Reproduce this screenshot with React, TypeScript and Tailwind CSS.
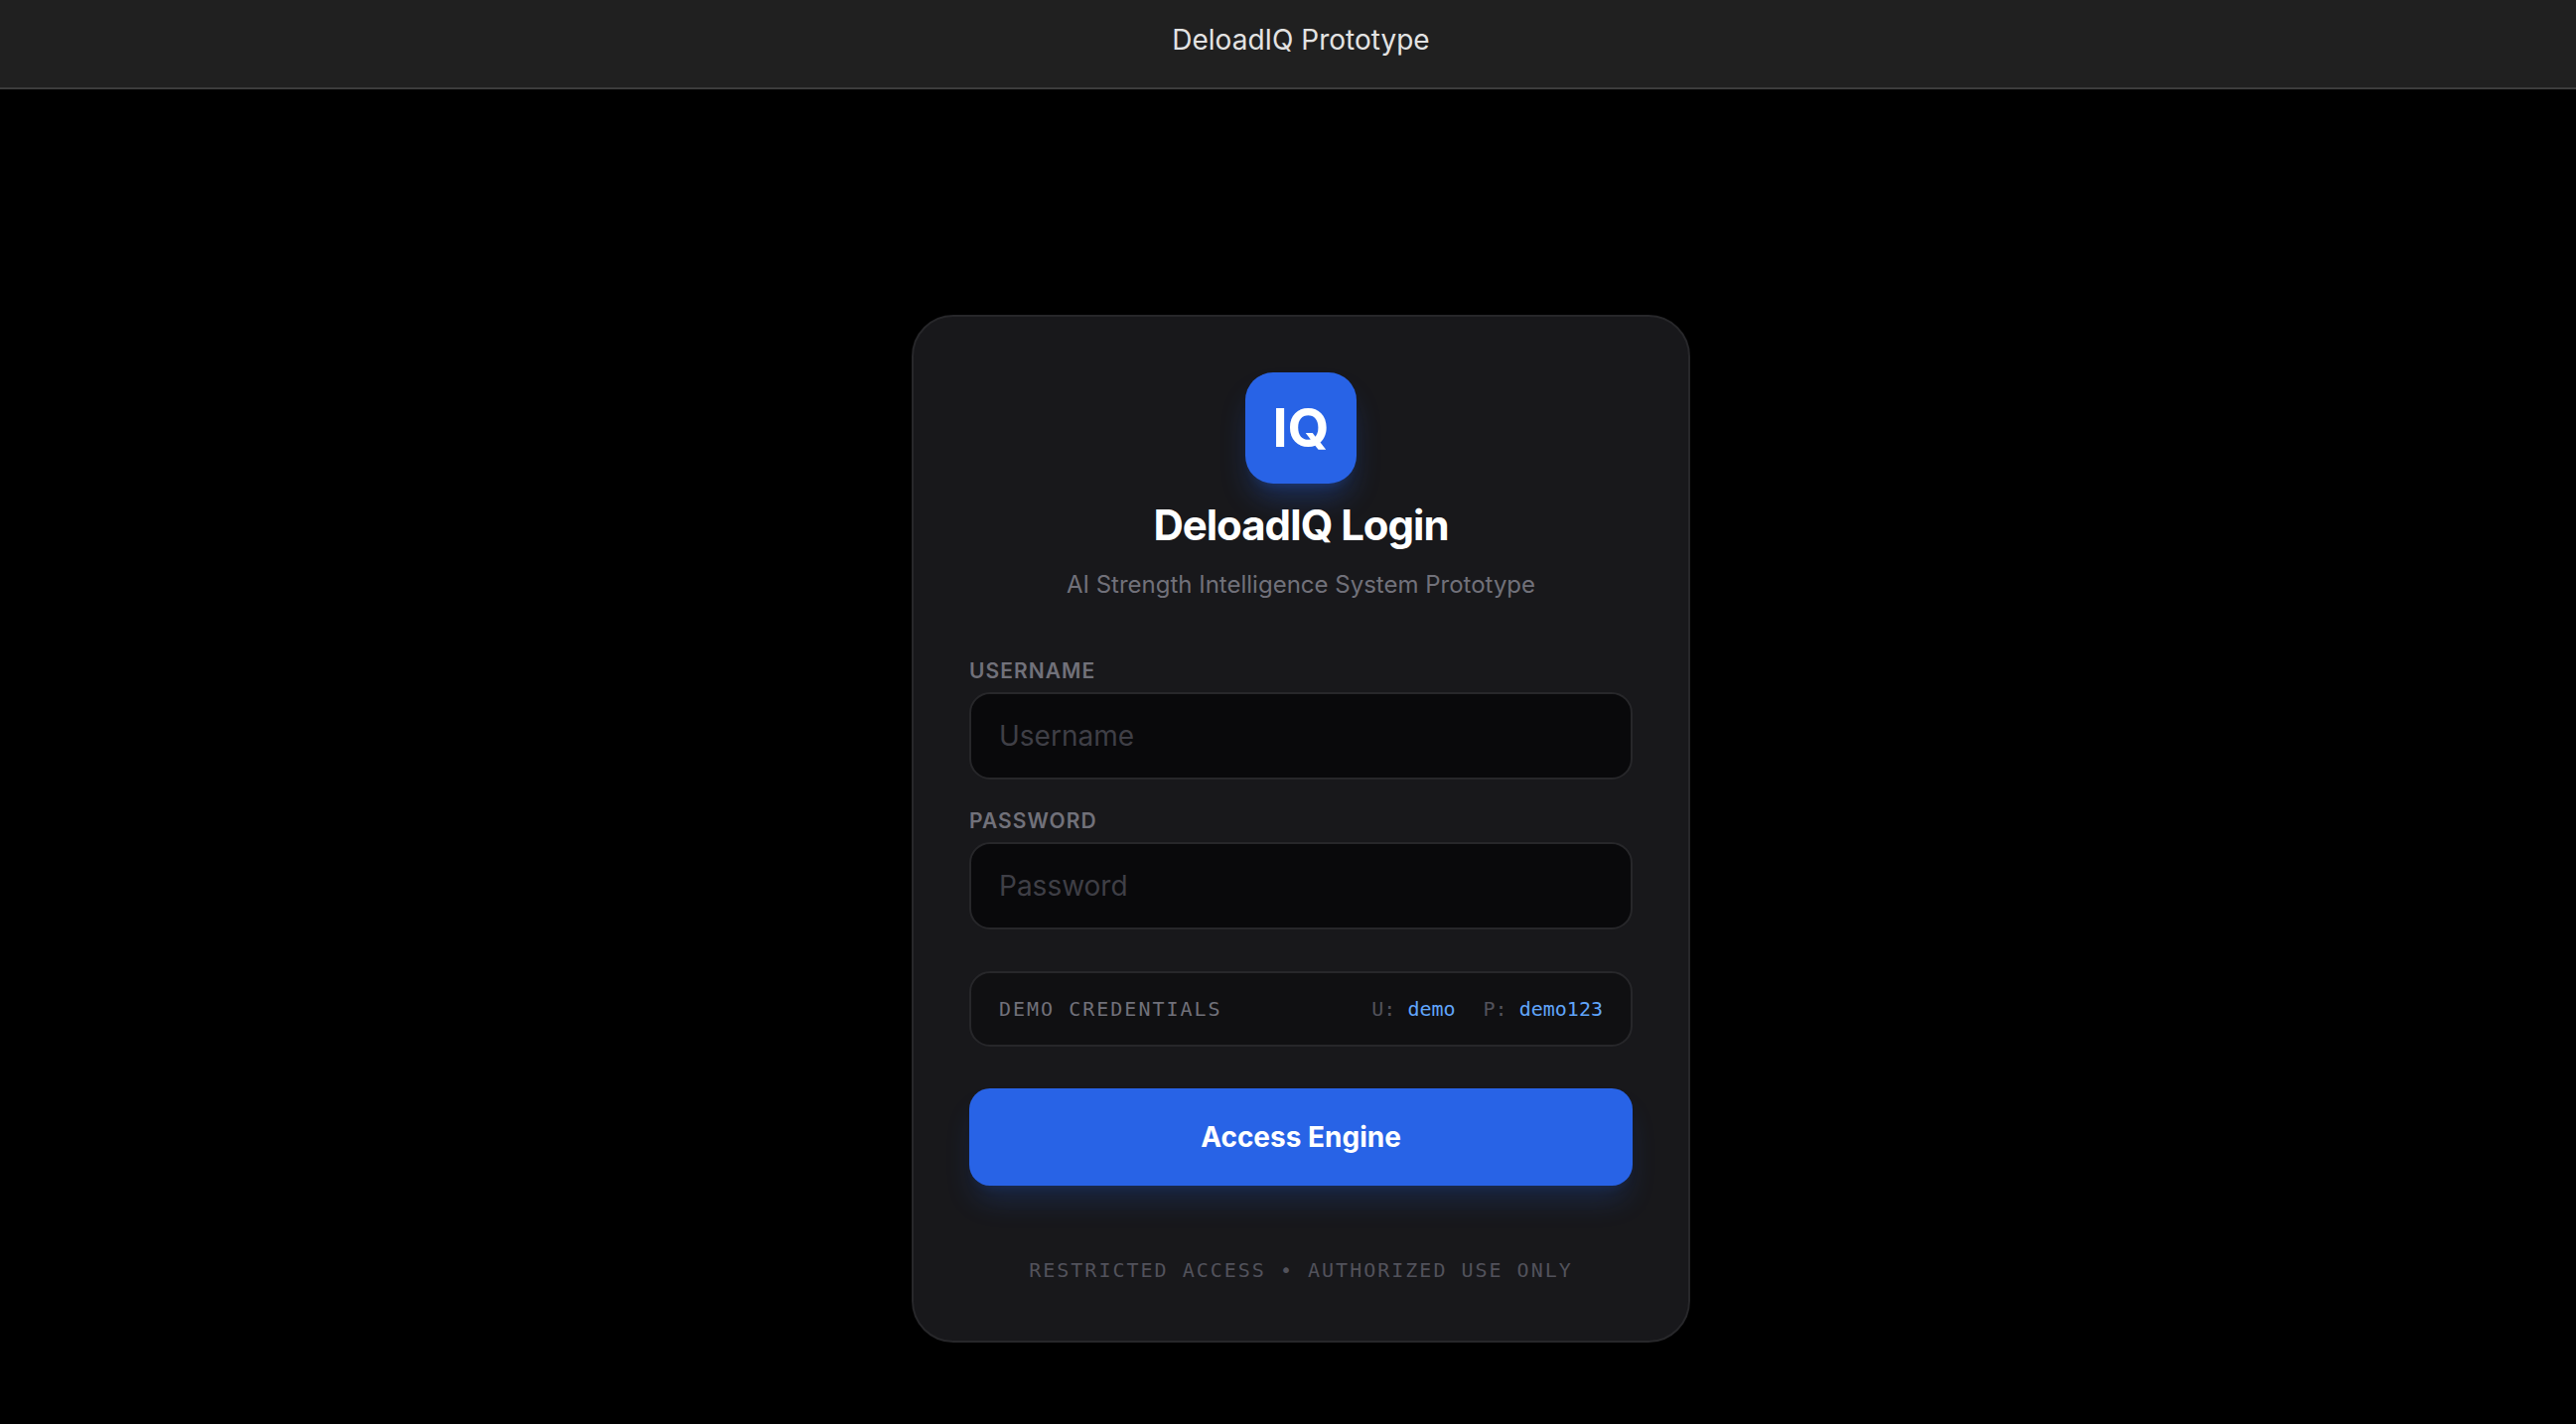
import React from 'react';
import { clsx } from 'clsx';

interface FieldProps {
  id: string;
  label: string;
  type: string;
  placeholder: string;
}

const Field: React.FC<FieldProps> = ({ id, label, type, placeholder }) => {
  return (
    <div className="flex flex-col gap-[7px]">
      <label
        htmlFor={id}
        className="text-[21px] leading-[28px] font-semibold uppercase tracking-wider text-[#71717a]"
      >
        {label}
      </label>
      <input
        id={id}
        type={type}
        placeholder={placeholder}
        className="w-full rounded-[21px] border-2 border-[#27272a] bg-[#09090b] px-[28px] py-[21px] text-[28px] leading-[42px] text-white placeholder:text-[#3f3f46] outline-none focus:border-blue-600"
      />
    </div>
  );
};

interface CredentialProps {
  name: string;
  value: string;
}

const Credential: React.FC<CredentialProps> = ({ name, value }) => (
  <span className="text-[#52525b]">
    {name}: <span className="text-[#60a5fa]">{value}</span>
  </span>
);

const mono = 'font-["DejaVu_Sans_Mono",monospace] text-[20px] leading-[30px]';

const App: React.FC = () => {
  return (
    <div className="min-h-screen bg-black font-['Inter',sans-serif] antialiased">
      <header className="border-b-2 border-[#3c3c3c] bg-[#202020] pl-[26px] pt-[19px] pb-[27px] text-center">
        <span className="block text-[28px] leading-[42px] text-[#e3e3e3]">
          DeloadIQ Prototype
        </span>
      </header>

      <main className="flex justify-center pl-[26px] pt-[227px] pb-[82px]">
        <div className="w-full max-w-[784px] rounded-[42px] border-2 border-[#27272a] bg-[#18181b] p-[56px]">
          {/* Logo and title */}
          <div className="flex flex-col items-center gap-[14px] text-center">
            <div className="flex size-[112px] items-center justify-center rounded-[28px] bg-[#2863e6] text-[54px] leading-[56px] font-bold text-white shadow-[0_20px_30px_-6px_rgba(37,99,235,0.3),0_8px_12px_-8px_rgba(37,99,235,0.3)]">
              IQ
            </div>
            <h1 className="text-[42px] leading-[56px] font-bold tracking-tight text-white">DeloadIQ Login</h1>
            <p className="text-[24px] leading-[35px] text-[#71717a]">AI Strength Intelligence System Prototype</p>
          </div>

          <form className="mt-[56px] flex flex-col gap-[42px]" onSubmit={(e) => e.preventDefault()}>
            <div className="flex flex-col gap-[28px]">
              <Field id="username" label="Username" type="text" placeholder="Username" />
              <Field id="password" label="Password" type="password" placeholder="Password" />
            </div>

            <div
              className={clsx(
                mono,
                'flex items-center justify-between rounded-[21px] border-2 border-[#27272a] bg-[#101012] px-[28px] py-[21px]'
              )}
            >
              <span className="uppercase tracking-widest text-[#71717a]">Demo Credentials</span>
              <div className="flex gap-[28px]">
                <Credential name="U" value="demo" />
                <Credential name="P" value="demo123" />
              </div>
            </div>

            <button
              type="submit"
              className="w-full rounded-[21px] bg-[#2863e6] py-[28px] text-[28px] leading-[42px] font-bold text-white shadow-[0_20px_30px_-6px_rgba(37,99,235,0.2),0_8px_12px_-8px_rgba(37,99,235,0.2)]"
            >
              Access Engine
            </button>
          </form>

          <p className={clsx(mono, 'mt-[70px] text-center uppercase tracking-widest text-[#52525b]')}>
            Restricted Access • Authorized Use Only
          </p>
        </div>
      </main>
    </div>
  );
};

export default App;
